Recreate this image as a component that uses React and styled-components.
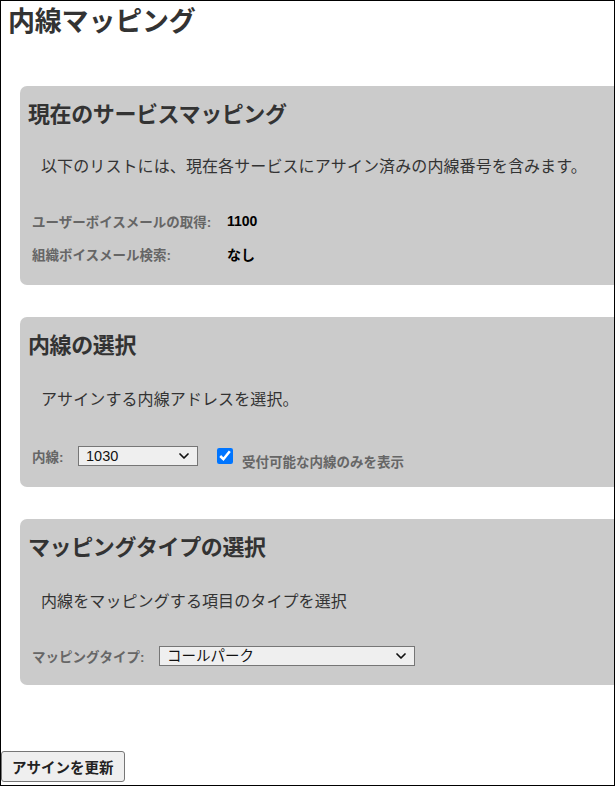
import React from 'react';
import styled, { createGlobalStyle } from 'styled-components';
import { ChevronDown } from 'lucide-react';

const GlobalStyle = createGlobalStyle`
  html, body {
    margin: 0;
    padding: 0;
    background: #fff;
  }
  body {
    font-family: "Liberation Sans", "Noto Sans CJK JP", sans-serif;
  }
`;

const App = () => {
  return (
    <>
      <GlobalStyle />
      <Frame>
        <Title>内線マッピング</Title>

        <Panel $pb={21}>
          <Heading>現在のサービスマッピング</Heading>
          <Description $mt={26}>以下のリストには、現在各サービスにアサイン済みの内線番号を含みます。</Description>
          <Row>
            <Label $width={195}>ユーザーボイスメールの取得:</Label>
            <Value>1100</Value>
          </Row>
          <Row $tight>
            <Label $width={195}>組織ボイスメール検索:</Label>
            <Value>なし</Value>
          </Row>
        </Panel>

        <Panel $pb={21}>
          <Heading>内線の選択</Heading>
          <Description>アサインする内線アドレスを選択。</Description>
          <Row $mt={34}>
            <Label $width={46}>内線:</Label>
            <SelectWrap $width={120}>
              <Select defaultValue="1030">
                <option value="1030">1030</option>
                <option value="1031">1031</option>
              </Select>
              <Chevron size={16} strokeWidth={2.6} />
            </SelectWrap>
            <CheckLabel>
              <Check type="checkbox" defaultChecked />
              <CheckText>受付可能な内線のみを表示</CheckText>
            </CheckLabel>
          </Row>
        </Panel>

        <Panel $pb={19}>
          <Heading>マッピングタイプの選択</Heading>
          <Description>内線をマッピングする項目のタイプを選択</Description>
          <Row>
            <Label $width={127}>マッピングタイプ:</Label>
            <SelectWrap $width={256}>
              <Select defaultValue="park">
                <option value="park">コールパーク</option>
                <option value="group">ハントグループ</option>
              </Select>
              <Chevron size={16} strokeWidth={2.6} />
            </SelectWrap>
          </Row>
        </Panel>

        <Footer>
          <UpdateButton type="button">アサインを更新</UpdateButton>
        </Footer>
      </Frame>
    </>
  );
};

export default App;

const Frame = styled.div`
  box-sizing: border-box;
  width: 615px;
  height: 786px;
  border: 1px solid #000;
  overflow: hidden;
  display: flex;
  flex-direction: column;
`;

const Title = styled.h1`
  margin: 3px 0 0 7px;
  font-size: 27px;
  line-height: 36px;
  font-weight: bold;
  color: #333;
  letter-spacing: -0.2px;
`;

const Panel = styled.section`
  box-sizing: border-box;
  margin: 46px -40px 0 19px;
  padding: 15px 0 ${({ $pb }) => $pb}px 8px;
  background-color: #cbcbcb;
  border-radius: 7px 0 0 7px;

  & + & {
    margin-top: 32px;
  }
`;

const Heading = styled.h2`
  margin: 0;
  font-size: 22px;
  line-height: 28px;
  font-weight: bold;
  color: #333;
  letter-spacing: -0.4px;
`;

const Description = styled.p`
  margin: ${({ $mt = 28 }) => $mt}px 0 0 13px;
  font-size: 16px;
  line-height: 24px;
  color: #333;
  letter-spacing: 0.1px;
`;

const Row = styled.div`
  display: flex;
  align-items: center;
  height: 20px;
  margin-top: ${({ $tight, $mt = 32 }) => ($tight ? 13 : $mt)}px;
  padding-left: 4px;
`;

const Label = styled.span`
  flex: none;
  width: ${({ $width }) => $width}px;
  font-size: 13.5px;
  font-weight: bold;
  color: #666;
  white-space: nowrap;
`;

const Value = styled.span`
  font-size: 14px;
  font-weight: bold;
  color: #000;
`;

const SelectWrap = styled.div`
  position: relative;
  flex: none;
  width: ${({ $width }) => $width}px;
  height: 20px;
`;

const Select = styled.select`
  appearance: none;
  box-sizing: border-box;
  width: 100%;
  height: 100%;
  margin: 0;
  padding: 0 24px 0 7px;
  border: 1px solid #767676;
  border-radius: 0;
  background-color: #efefef;
  font-family: "Liberation Sans", "Noto Sans CJK JP", sans-serif;
  font-size: 14.5px;
  color: #111;
  outline: none;
`;

const Chevron = styled(ChevronDown)`
  position: absolute;
  right: 6px;
  top: 2px;
  color: #111;
  pointer-events: none;
`;

const CheckLabel = styled.label`
  display: flex;
  align-items: center;
  margin-left: 19px;
`;

const Check = styled.input`
  width: 16px;
  height: 16px;
  margin: 0;
  accent-color: #0075ff;
`;

const CheckText = styled.span`
  margin: 9px 0 0 9px;
  font-size: 13.5px;
  font-weight: bold;
  color: #666;
`;

const Footer = styled.div`
  margin-top: auto;
  padding-bottom: 3px;
`;

const UpdateButton = styled.button`
  box-sizing: border-box;
  height: 31px;
  padding: 0 10px;
  border: 1px solid #767676;
  border-radius: 3px;
  background-color: #efefef;
  font-family: "Liberation Sans", "Noto Sans CJK JP", sans-serif;
  font-size: 14.5px;
  font-weight: bold;
  color: #222;
`;
